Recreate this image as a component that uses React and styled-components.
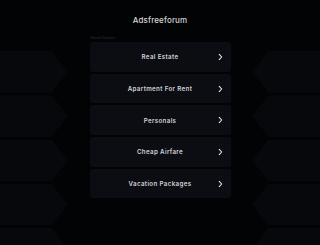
import React from "react";
import styled, { createGlobalStyle } from "styled-components";

const GlobalStyle = createGlobalStyle`
  html, body {
    margin: 0;
    padding: 0;
    background: #020305;
  }
  body {
    font-family: Inter, "Noto Sans", sans-serif;
    -webkit-font-smoothing: antialiased;
  }
`;

const StyledPage = styled.div`
  display: grid;
  grid-template-columns: 68px 1fr 68px;
  width: 320px;
  height: 245px;
  overflow: hidden;
  background: #020305;
`;

const StyledSide = styled.div`
  display: flex;
  flex-direction: column;
  gap: 2.4px;
  padding-top: 51px;
`;

const StyledArrow = styled.div`
  height: 41.8px;
  flex-shrink: 0;
  background: #06080c;
  clip-path: ${({ $flip }) =>
    $flip
      ? "polygon(24% 0, 100% 0, 100% 100%, 24% 100%, 0 50%)"
      : "polygon(0 0, 76% 0, 100% 50%, 76% 100%, 0 100%)"};
`;

const StyledMain = styled.div`
  display: flex;
  flex-direction: column;
  align-items: center;
  padding-top: 13.5px;
`;

const StyledTitle = styled.h1`
  margin: 0;
  font-size: 8px;
  line-height: 12px;
  font-weight: 500;
  color: #d4d6da;
  letter-spacing: 0.15px;
`;

const StyledList = styled.div`
  display: flex;
  flex-direction: column;
  gap: 2px;
  width: 141px;
  margin-top: 10.5px;
`;

const StyledLabel = styled.div`
  font-size: 3px;
  line-height: 4px;
  color: #2a2e36;
  padding-left: 1px;
`;

const StyledCard = styled.a`
  position: relative;
  display: flex;
  align-items: center;
  justify-content: center;
  height: 29.7px;
  border-radius: 3px;
  background: #0b0d12;
  color: #d0d2d6;
  font-size: 6.2px;
  font-weight: 600;
  letter-spacing: 0.35px;
  text-decoration: none;
`;

const StyledChevron = styled.svg`
  position: absolute;
  right: 8px;
  top: 50%;
  transform: translateY(-50%);
  width: 5px;
  height: 7px;
`;

const searches = [
  "Real Estate",
  "Apartment For Rent",
  "Personals",
  "Cheap Airfare",
  "Vacation Packages",
];

const Chevron = () => (
  <StyledChevron viewBox="0 0 5 7">
    <polyline
      points="1.2,0.8 3.7,3.5 1.2,6.2"
      fill="none"
      stroke="#e6e7ea"
      strokeWidth="1.1"
      strokeLinecap="round"
      strokeLinejoin="round"
    />
  </StyledChevron>
);

const App = () => (
  <>
    <GlobalStyle />
    <StyledPage>
      <StyledSide>
        {[0, 1, 2, 3, 4].map((i) => (
          <StyledArrow key={i} />
        ))}
      </StyledSide>
      <StyledMain>
        <StyledTitle>Adsfreeforum</StyledTitle>
        <StyledList>
          <StyledLabel>Related Searches</StyledLabel>
          {searches.map((name) => (
            <StyledCard key={name} href="#">
              {name}
              <Chevron />
            </StyledCard>
          ))}
        </StyledList>
      </StyledMain>
      <StyledSide>
        {[0, 1, 2, 3, 4].map((i) => (
          <StyledArrow key={i} $flip />
        ))}
      </StyledSide>
    </StyledPage>
  </>
);

export default App;
